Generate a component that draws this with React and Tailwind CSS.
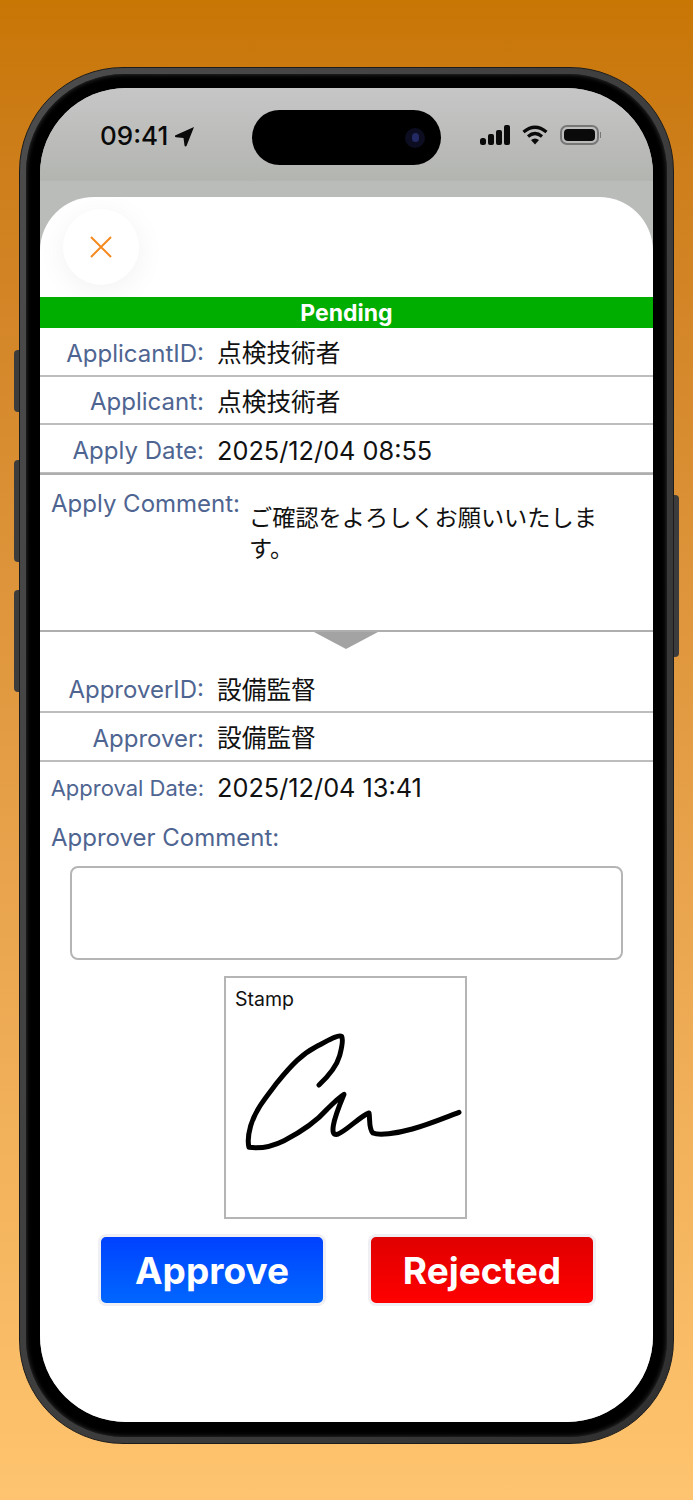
const cjk = "font-['Inter','Noto_Sans_CJK_JP',sans-serif]";

const Row = ({ label, value, small, date, border = true }) => (
  <div className={`flex items-center h-[48.5px] pt-[5px] ${border ? "border-b-2 border-[#bdbdbd]" : ""}`}>
    <div className={`w-[164px] shrink-0 text-right text-[#4f6591] ${small ? "text-[22px]" : "text-[24px]"}`}>
      {label}
    </div>
    <div className={`ml-[13px] text-[#111] ${date ? "text-[25.3px]" : "text-[24.7px]"}`}>{value}</div>
  </div>
);

const StatusBar = () => (
  <div className="h-[93px] bg-gradient-to-b from-[#c6c6c6] to-[#b3b5b1] flex items-start pt-[34px] pl-[60px] pr-[52px]">
    <div className="flex items-center gap-[6px]">
      <span className="text-[26px] leading-[28px] font-medium text-[#0a0a0a]">09:41</span>
      <svg width="21" height="21" viewBox="0 0 21 21">
        <path d="M20 1 L1 9.5 Q0.5 11 2 11.3 L9.5 12 L10.5 19.5 Q11 21 12.5 20 Z" fill="#0a0a0a" />
      </svg>
    </div>
    <div className="ml-auto mt-[1px] flex items-center gap-[12px] h-[24px]">
      <svg width="30" height="20" viewBox="0 0 30 20" fill="#0a0a0a">
        <rect x="0" y="13" width="6" height="7" rx="2.5" />
        <rect x="8" y="9" width="6" height="11" rx="2" />
        <rect x="16" y="5" width="6" height="15" rx="2" />
        <rect x="24" y="0" width="6" height="20" rx="2" />
      </svg>
      <svg width="26" height="20" viewBox="0 0 26 20" fill="none" stroke="#0a0a0a" strokeWidth="3.2">
        <path d="M1.5 7 Q13 -2.5 24.5 7" />
        <path d="M6 11.5 Q13 5.5 20 11.5" />
        <path d="M13 19.5 L9 15 Q13 12 17 15 Z" fill="#0a0a0a" stroke="none" />
      </svg>
      <div className="flex items-center gap-[1px]">
        <div className="w-[39px] h-[20px] rounded-[7px] border-2 border-[#777] p-[2px]">
          <div className="w-full h-full rounded-[4px] bg-[#0a0a0a]" />
        </div>
        <div className="w-[1.5px] h-[6px] bg-[#777]" />
      </div>
    </div>
  </div>
);

const App = () => {
  return (
    <main className={`relative w-[693px] h-[1500px] pt-[67px] pl-[19px] bg-gradient-to-b from-[#c87604] to-[#ffc46f] ${cjk}`}>
      {/* side buttons */}
      <div className="absolute left-[14px] top-[350px] w-[5px] h-[62px] rounded-l-sm bg-[#3c3c3c]" />
      <div className="absolute left-[14px] top-[460px] w-[5px] h-[102px] rounded-l-sm bg-[#3c3c3c]" />
      <div className="absolute left-[14px] top-[590px] w-[5px] h-[102px] rounded-l-sm bg-[#3c3c3c]" />
      <div className="absolute left-[674px] top-[495px] w-[5px] h-[162px] rounded-r-sm bg-[#3c3c3c]" />

      {/* phone frame */}
      <div className="w-[655px] h-[1377px] rounded-[104px] bg-gradient-to-br from-[#4c4c4c] to-[#303030] p-[6px] border border-[#1c1c1c]">
        <div className="w-full h-full rounded-[98px] bg-black pt-[14px] pl-[14px] shadow-[inset_0_0_5px_#3a3a3a]">
          <div className="relative w-[613px] h-[1334px] rounded-[86px] overflow-hidden bg-[#b9bcb8]">
            <StatusBar />

            {/* dynamic island */}
            <div className="absolute left-[212px] top-[22px] w-[189px] h-[55px] rounded-full bg-black flex items-center justify-end pr-[16px]">
              <div className="w-[20px] h-[20px] rounded-full bg-[#0c0d20] flex items-center justify-center">
                <div className="w-[7px] h-[9px] rounded-full bg-[#232a63]" />
              </div>
            </div>

            {/* sheet */}
            <div className="mt-[16px] h-[1225px] rounded-t-[54px] bg-white">
              <div className="h-[100px] pt-[12px] pl-[23px]">
                <button className="w-[76px] h-[76px] rounded-full bg-white shadow-[0_5px_30px_rgba(0,0,0,0.06)] flex items-center justify-center">
                  <svg width="24" height="24" viewBox="0 0 24 24" fill="none" stroke="#f58a1f" strokeWidth="2">
                    <path d="M2 2 L22 22 M22 2 L2 22" />
                  </svg>
                </button>
              </div>

              <div className="h-[31px] bg-[#00ae00] text-white text-center font-bold text-[23px] leading-[32px]">
                Pending
              </div>

              <Row label="ApplicantID:" value="点検技術者" />
              <Row label="Applicant:" value="点検技術者" />
              <Row label="Apply Date:" value="2025/12/04 08:55" date />

              <div className="relative h-[159px] border-y-2 border-[#aeaeae] -mt-[1px] flex pl-[11px]">
                <div className="text-[24px] text-[#4f6591] pt-[13px] leading-[32px]">Apply Comment:</div>
                <div className="ml-[9px] mt-[28px] w-[352px] text-[23.2px] leading-[31px] text-[#111]">
                  ご確認をよろしくお願いいたします。
                </div>
                <svg className="absolute left-[274px] -bottom-[19px]" width="64" height="17" viewBox="0 0 64 17">
                  <path d="M0 0 H64 L32 17 Z" fill="#a3a3a3" />
                </svg>
              </div>

              <div className="pt-[33px]">
                <Row label="ApproverID:" value="設備監督" />
                <Row label="Approver:" value="設備監督" />
                <Row label="Approval Date:" value="2025/12/04 13:41" small date border={false} />
              </div>

              <div className="pl-[11px] mt-[12px] text-[24px] leading-[32px] text-[#4f6591]">Approver Comment:</div>

              <div className="ml-[30px] mt-[12px] w-[553px] h-[94px] rounded-lg border-2 border-[#b5b5b5]" />

              <div className="relative ml-[184px] mt-[16px] w-[243px] h-[243px] border-2 border-[#b5b5b5] pl-[9px] pt-[7px] text-[19.5px] leading-[28px] text-[#111]">
                Stamp
                <svg className="absolute left-0 top-0" width="240" height="240" viewBox="81 57 720 720" fill="none" stroke="#000" strokeWidth="15" strokeLinecap="round" strokeLinejoin="round">
                  <path d="M360 378 C390 350 412 325 422 290 C430 260 432 240 428 232 C418 226 395 240 350 264 C310 285 280 315 235 370 C205 410 170 450 155 500 C148 525 146 550 150 565 C175 568 215 565 255 545 C300 522 350 490 385 450 C405 430 425 412 435 406 C425 430 408 470 403 500 C400 520 403 528 415 526 C440 518 485 470 510 462 C514 480 508 510 522 522 C540 530 590 524 640 510 C690 496 740 475 780 460" />
                </svg>
              </div>

              <div className="mt-[15px] pl-[58px] flex gap-[42px]">
                <button className="w-[228px] h-[72px] rounded-[8px] border-[3px] border-[#f0f0f4] bg-gradient-to-b from-[#0040ff] to-[#0066ff] text-white font-bold text-[37px] leading-none">
                  Approve
                </button>
                <button className="w-[228px] h-[72px] rounded-[8px] border-[3px] border-[#f0f0f4] bg-gradient-to-b from-[#e00000] to-[#ff0000] text-white font-bold text-[37px] leading-none">
                  Rejected
                </button>
              </div>
            </div>
          </div>
        </div>
      </div>
    </main>
  );
};

export default App;
